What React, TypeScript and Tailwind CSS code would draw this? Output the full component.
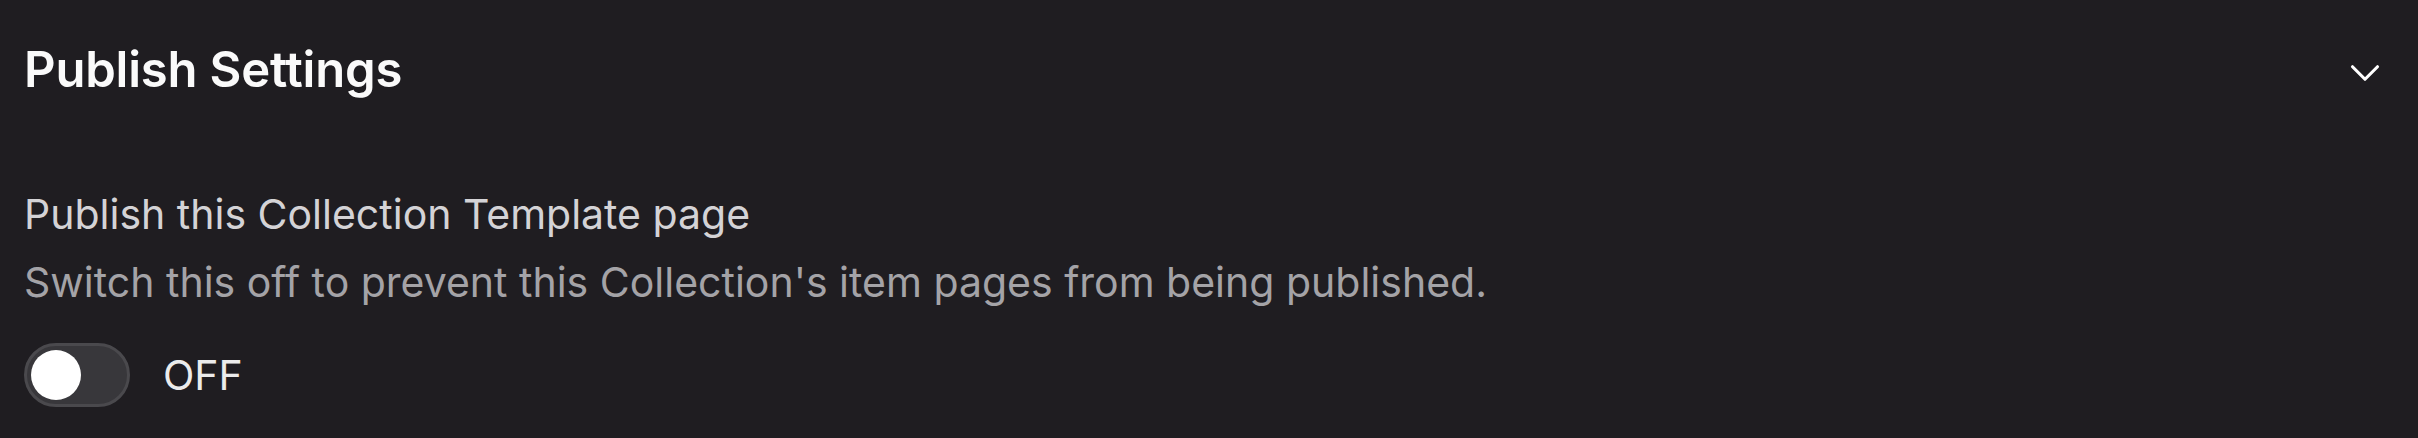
import React from "react";
import { ChevronDown } from "lucide-react";

export default function App() {
  return (
    <div
      className="w-full h-[438px] bg-[#1f1d21] pl-[24px] pr-[28px] pt-[40px]"
      style={{ fontFamily: "Inter, 'Noto Sans', sans-serif" }}
    >
      <div className="flex items-center justify-between">
        <h1 className="text-[49px] leading-[60px] font-semibold text-[#fafafa] tracking-[-0.2px]">
          Publish Settings
        </h1>
        <ChevronDown size={50} strokeWidth={1.5} className="text-white mt-[6px]" />
      </div>

      <div className="mt-[80px]">
        <p className="text-[41px] leading-[68px] text-[#d4d3d6]">
          Publish this Collection Template page
        </p>
        <p className="text-[41px] leading-[68px] text-[#a4a3a7]">
          Switch this off to prevent this Collection's item pages from being published.
        </p>
      </div>

      <div className="mt-[27px] flex items-center gap-[33px]">
        <button className="w-[106px] h-[64px] rounded-full border-[3px] border-[#4a494d] bg-[#38373b] flex items-center px-[4px]">
          <span className="w-[50px] h-[50px] rounded-full bg-white block" />
        </button>
        <span className="text-[41px] leading-[50px] text-[#ebebeb]">OFF</span>
      </div>
    </div>
  );
}
